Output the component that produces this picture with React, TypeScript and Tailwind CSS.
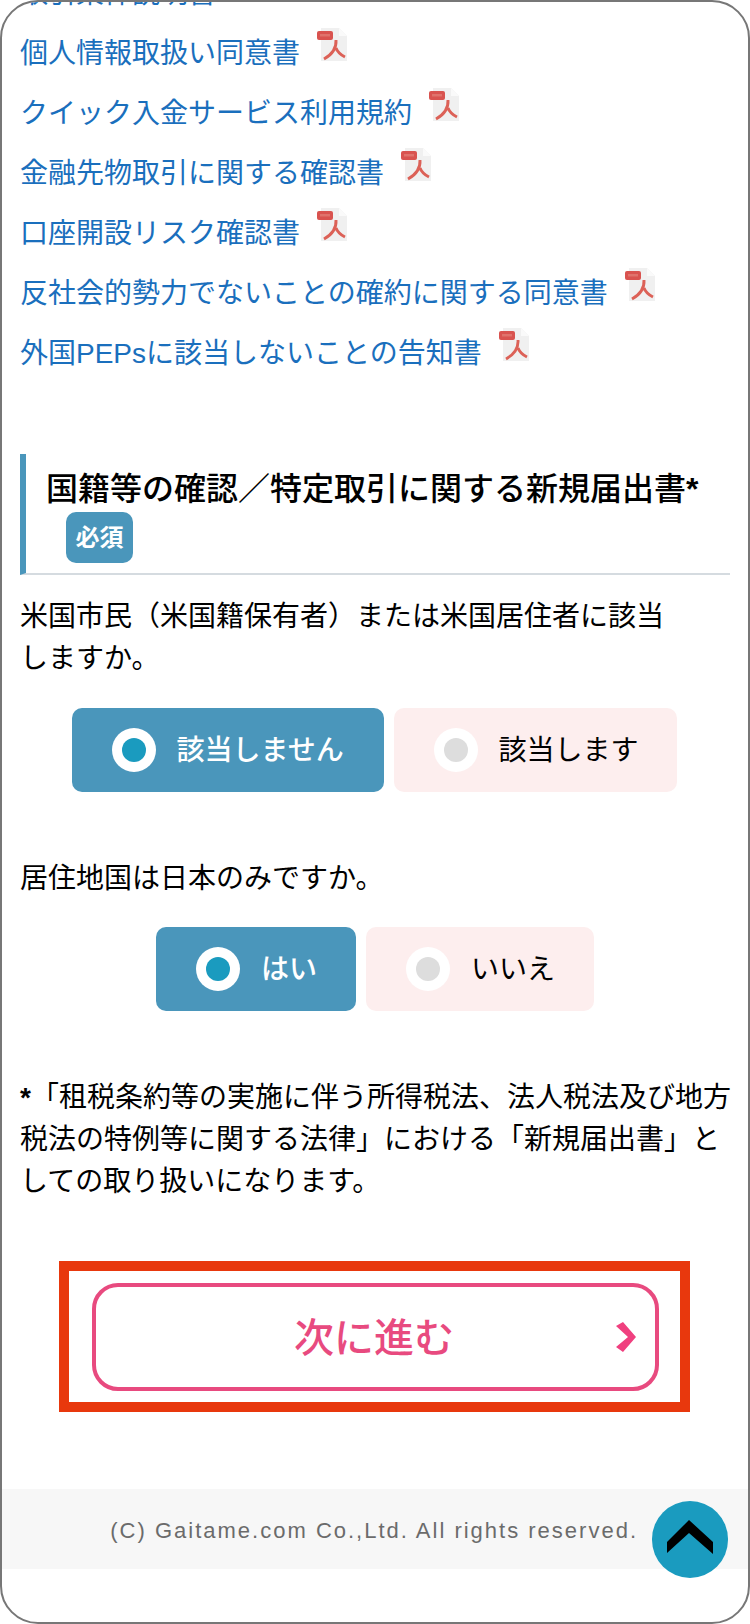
const docs = [
  "取引条件説明書",
  "個人情報取扱い同意書",
  "クイック入金サービス利用規約",
  "金融先物取引に関する確認書",
  "口座開設リスク確認書",
  "反社会的勢力でないことの確約に関する同意書",
  "外国PEPsに該当しないことの告知書",
];

function PdfIcon() {
  return (
    <svg width="31" height="34" viewBox="0 0 31 34" className="ml-[17px] mb-3 shrink-0 blur-[0.5px]">
      <path d="M4 1H22L30 9V34H4Z" fill="#f0f0f0" />
      <path d="M22 1V9H30Z" fill="#fafafa" />
      <path d="M19 13C19.5 20 16 27 7 32M19 21C20.5 25 24 28 28 30" fill="none" stroke="#dc6157" strokeWidth="2.9" />
      <rect x="0" y="4" width="16" height="9" rx="2" fill="#d9534f" />
      <rect x="3" y="7" width="10" height="2.5" fill="#e0736c" />
    </svg>
  );
}

function Radio({ on }: { on: boolean }) {
  return (
    <span className="flex h-[44px] w-[44px] shrink-0 items-center justify-center rounded-full bg-white">
      <span className={`h-[24px] w-[24px] rounded-full ${on ? "bg-[#1a9bbf]" : "bg-[#dddddd]"}`} />
    </span>
  );
}

function Choice({ label, on, width }: { label: string; on: boolean; width: string }) {
  return (
    <div
      className={`flex h-[84px] items-center gap-[21px] rounded-[10px] pl-10 ${width} ${
        on ? "bg-[#4a96bb] font-medium text-white" : "bg-[#fdeeee] font-normal text-black"
      }`}
    >
      <Radio on={on} />
      <span className="pt-[2px]">{label}</span>
    </div>
  );
}

export default function App() {
  return (
    <div className="relative h-[1624px] w-[750px] overflow-hidden rounded-[38px] border-2 border-[#777777] bg-white font-['Liberation_Sans','Noto_Sans_CJK_JP',sans-serif] text-[28px] leading-[42px] text-black">
      <ul className="-mt-[42px] pl-[18px]">
        {docs.map((d, i) => (
          <li key={d} className="flex h-[60px] items-center text-[#1a6fbd]">
            <span className="pt-[7px]">{d}</span>
            {i > 0 && <PdfIcon />}
          </li>
        ))}
      </ul>

      <div className="mx-[18px] mt-[74px] border-b-2 border-l-[6px] border-b-[#d5dbe0] border-l-[#4a96bb] pb-[10px] pl-5 pt-[14px]">
        <h2 className="whitespace-nowrap text-[32px] font-medium leading-[42px]">
          国籍等の確認／特定取引に関する新規届出書<span className="font-bold">*</span>
        </h2>
        <span className="ml-[20px] mt-[2px] flex h-[51px] w-[67px] items-center justify-center rounded-[10px] bg-[#4a96bb] text-[24px] font-bold text-white">
          必須
        </span>
      </div>

      <div className="px-[18px]">
        <p className="mt-[21px]">
          米国市民（米国籍保有者）または米国居住者に該当
          <br />
          しますか。
        </p>
        <div className="mt-[28px] flex justify-center gap-[10px] pr-[2px]">
          <Choice label="該当しません" on width="w-[312px]" />
          <Choice label="該当します" on={false} width="w-[283px]" />
        </div>

        <p className="mt-[66px]">居住地国は日本のみですか。</p>
        <div className="mt-[27px] flex justify-center gap-[10px]">
          <Choice label="はい" on width="w-[200px]" />
          <Choice label="いいえ" on={false} width="w-[228px]" />
        </div>

        <p className="mt-[66px] whitespace-nowrap">
          <span className="font-bold">*</span>「租税条約等の実施に伴う所得税法、法人税法及び地方
          <br />
          税法の特例等に関する法律」における「新規届出書」と
          <br />
          しての取り扱いになります。
        </p>
      </div>

      <div className="ml-[57px] mt-[58px] h-[151px] w-[631px] border-[10px] border-[#e8380d] pl-[23px] pt-3">
        <div className="relative flex h-[108px] w-[567px] items-center justify-center rounded-[26px] border-4 border-[#e84a7f] pr-[3px] pt-[2px] text-[40px] font-medium text-[#e84a7f]">
          次に進む
          <svg width="20" height="30" viewBox="0 0 20 30" className="absolute right-[19px] top-[35px]">
            <polygon points="0,4 7,0 20,15 7,30 0,25 12,15" fill="#f0407f" />
          </svg>
        </div>
      </div>

      <footer className="relative mt-[77px] flex h-[80px] items-center justify-end bg-[#f7f7f7] pr-[110px] text-[22px] tracking-[2px] text-[#6b6b6b]">
        <span className="pt-[4px]">(C) Gaitame.com Co.,Ltd. All rights reserved.</span>
        <span className="absolute right-[20px] top-[12px] h-[77px] w-[76px] rounded-full bg-[#1a9bbf]">
          <svg width="76" height="77" viewBox="0 0 76 77">
            <polygon points="37,19 61,41 61,53 37,32 15,52 15,41" fill="#000000" />
          </svg>
        </span>
      </footer>
    </div>
  );
}
